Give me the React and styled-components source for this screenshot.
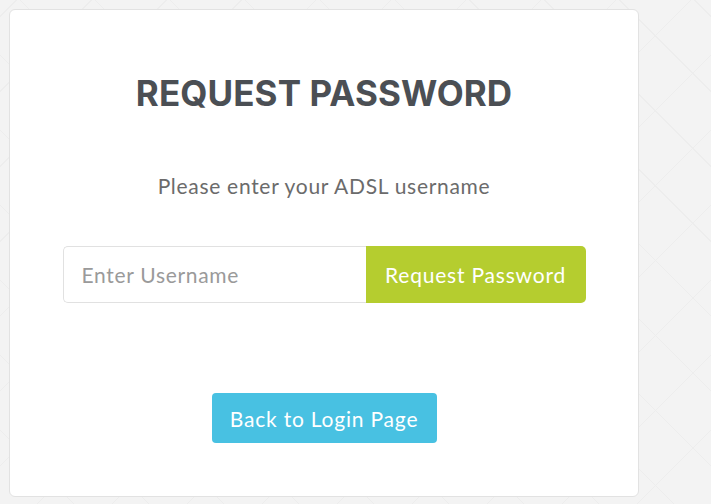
import styled, { createGlobalStyle } from "styled-components";

const GlobalStyle = createGlobalStyle`
  html, body {
    margin: 0;
    padding: 0;
    height: 100%;
  }
  body {
    background-color: #f3f3f3;
    background-image:
      repeating-linear-gradient(45deg, transparent 0, transparent 52px, #ededed 52px, #ededed 53px),
      repeating-linear-gradient(-45deg, transparent 0, transparent 52px, #ededed 52px, #ededed 53px);
    font-family: "Lato", "Noto Sans", sans-serif;
  }
`;

const Page = styled.div`
  padding: 9px;
  min-height: 504px;
  box-sizing: border-box;
`;

const Card = styled.div`
  width: 630px;
  height: 488px;
  box-sizing: border-box;
  background: #fff;
  border: 1px solid #e2e2e2;
  border-radius: 6px;
  display: flex;
  flex-direction: column;
  align-items: center;
  padding: 61px 53px 0;
`;

const Title = styled.h1`
  margin: 0;
  font-family: "Inter", "Noto Sans", sans-serif;
  font-weight: 650;
  font-size: 35px;
  line-height: 44px;
  color: #4b4f54;
  letter-spacing: 0.1px;
`;

const Lead = styled.p`
  margin: 58px 0 0;
  font-size: 21px;
  line-height: 26px;
  letter-spacing: 0.7px;
  color: #6b6b6b;
`;

const InputGroup = styled.form`
  margin-top: 47px;
  width: 523px;
  height: 57px;
  display: flex;
`;

const Field = styled.input`
  flex: 1;
  min-width: 0;
  box-sizing: border-box;
  border: 1px solid #e1e1e1;
  border-right: none;
  border-radius: 5px 0 0 5px;
  padding: 0 18px;
  font-family: inherit;
  font-size: 21px;
  letter-spacing: 0.7px;
  color: #555;
  outline: none;
  &::placeholder {
    color: #9a9a9a;
  }
`;

const Button = styled.button`
  border: none;
  font-family: inherit;
  font-size: 21px;
  letter-spacing: 0.8px;
  color: #fff;
  cursor: pointer;
  background: ${(p) => p.$bg};
`;

const RequestButton = styled(Button)`
  width: 220px;
  border-radius: 0 5px 5px 0;
`;

const BackButton = styled(Button)`
  margin-top: 90px;
  width: 225px;
  height: 50px;
  border-radius: 4px;
`;

export default function App() {
  return (
    <>
      <GlobalStyle />
      <Page>
        <Card>
          <Title>REQUEST PASSWORD</Title>
          <Lead>Please enter your ADSL username</Lead>
          <InputGroup onSubmit={(e) => e.preventDefault()}>
            <Field type="text" placeholder="Enter Username" />
            <RequestButton type="submit" $bg="#b5cd2f">Request Password</RequestButton>
          </InputGroup>
          <BackButton type="button" $bg="#48c1e2">Back to Login Page</BackButton>
        </Card>
      </Page>
    </>
  );
}
